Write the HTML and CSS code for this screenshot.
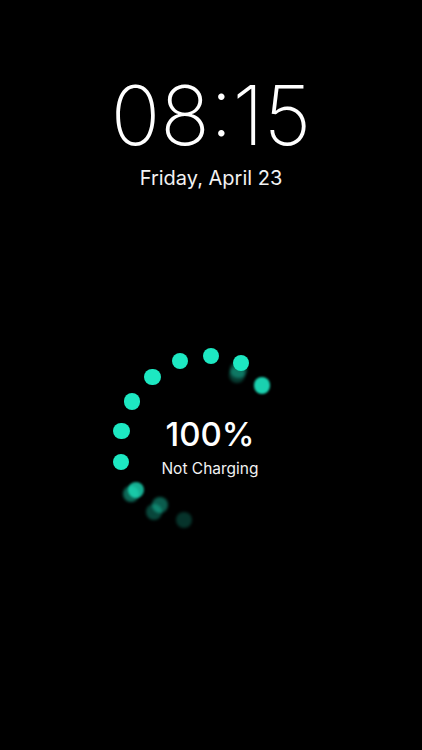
FILE: index.html
```html
<!DOCTYPE html>
<html lang="en">
<head>
<meta charset="utf-8">
<title>Lock screen</title>
<link rel="stylesheet" href="styles.css">
</head>
<body>
<main class="screen">
  <header class="clock">
    <div class="time">08:15</div>
    <div class="date">Friday, April 23</div>
  </header>
  <section class="charger">
    <div class="ring">
      <span class="dot ghost" style="left:184px;top:520px;opacity:.22"></span>
      <span class="dot ghost" style="left:154px;top:512px;opacity:.3"></span>
      <span class="dot ghost" style="left:160px;top:505px;opacity:.4"></span>
      <span class="dot ghost" style="left:131px;top:494px;opacity:.45"></span>
      <span class="dot soft" style="left:136px;top:490px;opacity:.75"></span>
      <span class="dot" style="left:121px;top:462px"></span>
      <span class="dot" style="left:121.5px;top:431px"></span>
      <span class="dot" style="left:132px;top:401.5px"></span>
      <span class="dot" style="left:152.5px;top:377px"></span>
      <span class="dot" style="left:180px;top:361px"></span>
      <span class="dot" style="left:211px;top:356px"></span>
      <span class="dot ghost" style="left:237px;top:375px;opacity:.25"></span>
      <span class="dot ghost" style="left:238.5px;top:370px;opacity:.35"></span>
      <span class="dot" style="left:241px;top:363px"></span>
      <span class="dot soft" style="left:262px;top:385.5px;opacity:.9"></span>
    </div>
    <div class="status">
      <div class="level">100%</div>
      <div class="state">Not Charging</div>
    </div>
  </section>
</main>
</body>
</html>
```
FILE: styles.css
```css
html, body {
  margin: 0;
  padding: 0;
  background: #000;
}
body {
  width: 422px;
  height: 750px;
  overflow: hidden;
  color: #fff;
  font-family: Inter, "Noto Sans", "Liberation Sans", sans-serif;
}
.screen {
  position: relative;
  width: 422px;
  height: 750px;
}
.clock {
  display: flex;
  flex-direction: column;
  align-items: center;
  padding-top: 75px;
}
.time {
  font-size: 82px;
  font-weight: 200;
  line-height: 82px;
  letter-spacing: 0;
}
.date {
  margin-top: 9px;
  font-size: 20px;
  font-weight: 400;
  line-height: 24px;
  color: #f2f2f2;
}
.charger {
  display: flex;
  justify-content: center;
}
.ring {
  position: absolute;
  left: 0;
  top: 0;
  width: 422px;
  height: 750px;
}
.dot {
  position: absolute;
  width: 16.5px;
  height: 16.5px;
  margin: -8.25px 0 0 -8.25px;
  border-radius: 50%;
  background: #1de8c2;
}
.dot.soft {
  filter: blur(0.8px);
}
.dot.ghost {
  filter: blur(1.6px);
}
.status {
  position: relative;
  margin-top: 226px;
  margin-left: -2px;
  display: flex;
  flex-direction: column;
  align-items: center;
}
.level {
  font-size: 33px;
  font-weight: 500;
  line-height: 36px;
}
.state {
  margin-top: 7px;
  font-size: 15.5px;
  font-weight: 400;
  line-height: 20px;
  color: #f2f2f2;
}
```
